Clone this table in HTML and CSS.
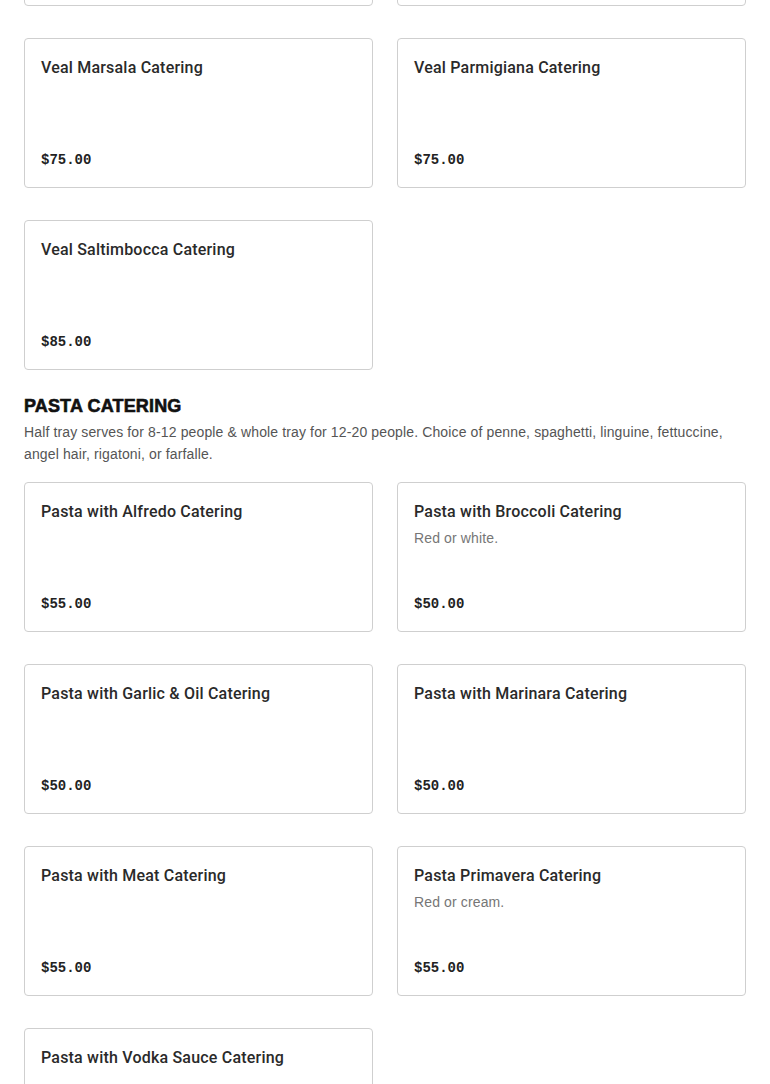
FILE: index.html
```html
<!DOCTYPE html>
<html>
<head>
<meta charset="utf-8">
<link rel="stylesheet" href="styles.css">
</head>
<body>
<div class="page">
  <section class="section">
    <div class="grid">
      <div class="card"><div class="card-body"><h3 class="title">Veal Francese Catering</h3></div><div class="price">$75.00</div></div>
      <div class="card"><div class="card-body"><h3 class="title">Veal Marsala Catering</h3></div><div class="price">$75.00</div></div>
      <div class="card"><div class="card-body"><h3 class="title">Veal Marsala Catering</h3></div><div class="price">$75.00</div></div>
      <div class="card"><div class="card-body"><h3 class="title">Veal Parmigiana Catering</h3></div><div class="price">$75.00</div></div>
      <div class="card"><div class="card-body"><h3 class="title">Veal Saltimbocca Catering</h3></div><div class="price">$85.00</div></div>
    </div>
  </section>
  <section class="section">
    <h2 class="section-title">PASTA CATERING</h2>
    <p class="section-desc">Half tray serves for 8-12 people &amp; whole tray for 12-20 people. Choice of penne, spaghetti, linguine, fettuccine, angel hair, rigatoni, or farfalle.</p>
    <div class="grid">
      <div class="card"><div class="card-body"><h3 class="title">Pasta with Alfredo Catering</h3></div><div class="price">$55.00</div></div>
      <div class="card"><div class="card-body"><h3 class="title">Pasta with Broccoli Catering</h3><p class="desc">Red or white.</p></div><div class="price">$50.00</div></div>
      <div class="card"><div class="card-body"><h3 class="title">Pasta with Garlic &amp; Oil Catering</h3></div><div class="price">$50.00</div></div>
      <div class="card"><div class="card-body"><h3 class="title">Pasta with Marinara Catering</h3></div><div class="price">$50.00</div></div>
      <div class="card"><div class="card-body"><h3 class="title">Pasta with Meat Catering</h3></div><div class="price">$55.00</div></div>
      <div class="card"><div class="card-body"><h3 class="title">Pasta Primavera Catering</h3><p class="desc">Red or cream.</p></div><div class="price">$55.00</div></div>
      <div class="card"><div class="card-body"><h3 class="title">Pasta with Vodka Sauce Catering</h3></div><div class="price">$55.00</div></div>
    </div>
  </section>
</div>
</body>
</html>
```

FILE: styles.css
```css
* { box-sizing: border-box; }
html, body { margin: 0; padding: 0; background: #fff; }
body { font-family: "Liberation Sans", Arial, sans-serif; color: #222; }
.page { padding: 0 24px; margin-top: -144px; }
.grid {
  display: grid;
  grid-template-columns: 1fr 1fr;
  column-gap: 24px;
  row-gap: 32px;
}
.card {
  border: 1px solid #cfcfcf;
  border-radius: 4px;
  padding: 17px 16px 15px;
  min-height: 150px;
  display: flex;
  flex-direction: column;
  justify-content: space-between;
}
.title {
  margin: 0;
  font-family: Roboto, "Liberation Sans", sans-serif;
  font-size: 16px;
  line-height: 24px;
  font-weight: 500;
  letter-spacing: 0.2px;
  color: #2a2a2a;
}
.desc {
  margin: 4px 0 0;
  font-size: 14px;
  line-height: 20px;
  letter-spacing: 0.13px;
  color: #767676;
}
.price {
  font-family: "Liberation Mono", "DejaVu Sans Mono", monospace;
  font-weight: 700;
  font-size: 14px;
  line-height: 24px;
  color: #222;
}
.section-title {
  margin: 24px 0 3px;
  font-size: 18px;
  line-height: 24px;
  font-weight: 700;
  letter-spacing: 0.15px;
  -webkit-text-stroke: 0.6px #111;
  color: #111;
}
.section-desc {
  margin: 0 0 17px;
  font-size: 14px;
  line-height: 22px;
  letter-spacing: 0.13px;
  color: #555;
}
```
